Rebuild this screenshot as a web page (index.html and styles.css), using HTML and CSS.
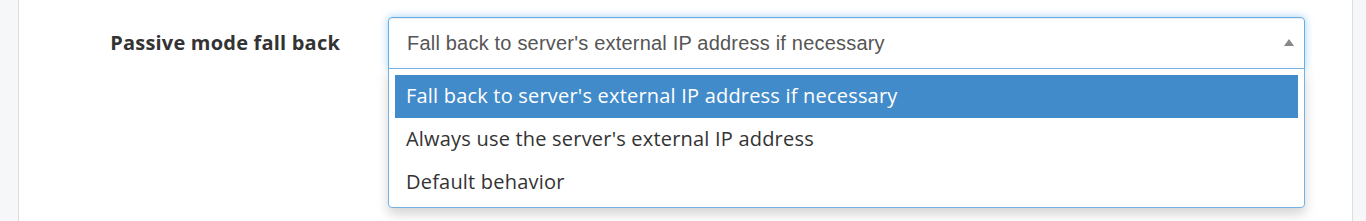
FILE: index.html
```html
<!DOCTYPE html>
<html lang="en">
<head>
    <meta charset="UTF-8">
    <title>FTP Settings</title>
    <link rel="stylesheet" href="styles.css">
</head>
<body>
    <div class="layout">
        <aside class="side side-left"></aside>
        <main class="content">
            <div class="form-row">
                <label class="form-label">Passive mode fall back</label>
                <div class="select-wrap">
                    <div class="select open">
                        <span class="select-value">Fall back to server's external IP address if necessary</span>
                        <span class="select-arrow"></span>
                    </div>
                    <ul class="select-menu">
                        <li class="option active">Fall back to server's external IP address if necessary</li>
                        <li class="option">Always use the server's external IP address</li>
                        <li class="option">Default behavior</li>
                    </ul>
                </div>
            </div>
        </main>
        <aside class="side side-right"></aside>
    </div>
</body>
</html>
```

FILE: styles.css
```css
:root {
    --side-bg: #f6f7f9;
    --side-border: #dcdde0;
    --focus: #66afe9;
    --menu-border: #74b2e6;
    --active: #428bca;
    --text: #333333;
    --text-muted: #555555;
}

* {
    margin: 0;
    padding: 0;
    box-sizing: border-box;
}

body {
    background: #fff;
    font-family: 'Open Sans', 'Noto Sans', sans-serif;
    color: var(--text);
    letter-spacing: 0.2px;
    height: 221px;
    overflow: hidden;
}

.layout {
    display: flex;
    height: 100%;
}

.side {
    background: var(--side-bg);
    flex-shrink: 0;
}

.side-left {
    width: 19px;
    border-right: 1px solid var(--side-border);
}

.side-right {
    width: 14px;
    border-left: 1px solid var(--side-border);
}

.content {
    flex-grow: 1;
    padding-top: 17px;
}

.form-row {
    display: grid;
    grid-template-columns: 321px 917px;
    column-gap: 48px;
}

.form-label {
    text-align: right;
    font-weight: 700;
    font-size: 20px;
    line-height: 52px;
    color: var(--text);
}

.select-wrap {
    position: relative;
}

.select {
    height: 52px;
    border: 1px solid var(--focus);
    border-radius: 4px 4px 0 0;
    box-shadow: inset 0 1px 1px rgba(0, 0, 0, 0.075), 0 0 8px rgba(102, 175, 233, 0.6);
    display: flex;
    align-items: center;
    padding: 0 10px 0 18px;
    font-family: 'Liberation Sans', Arial, sans-serif;
    font-size: 20px;
    color: var(--text-muted);
}

.select-value {
    flex-grow: 1;
}

.select-arrow {
    width: 0;
    height: 0;
    border-left: 5px solid transparent;
    border-right: 5px solid transparent;
    border-bottom: 7px solid #888;
    margin-bottom: 2px;
}

.select-menu {
    position: absolute;
    top: 51px;
    left: 0;
    width: 917px;
    list-style: none;
    background: #fff;
    border: 1px solid var(--menu-border);
    border-radius: 0 0 4px 4px;
    box-shadow: 0 6px 12px rgba(0, 0, 0, 0.175);
    padding: 6px 6px 3px;
}

.option {
    height: 43px;
    line-height: 42px;
    padding-left: 11px;
    font-size: 20px;
    color: var(--text);
}

.option.active {
    background: var(--active);
    color: #fff;
}
```
